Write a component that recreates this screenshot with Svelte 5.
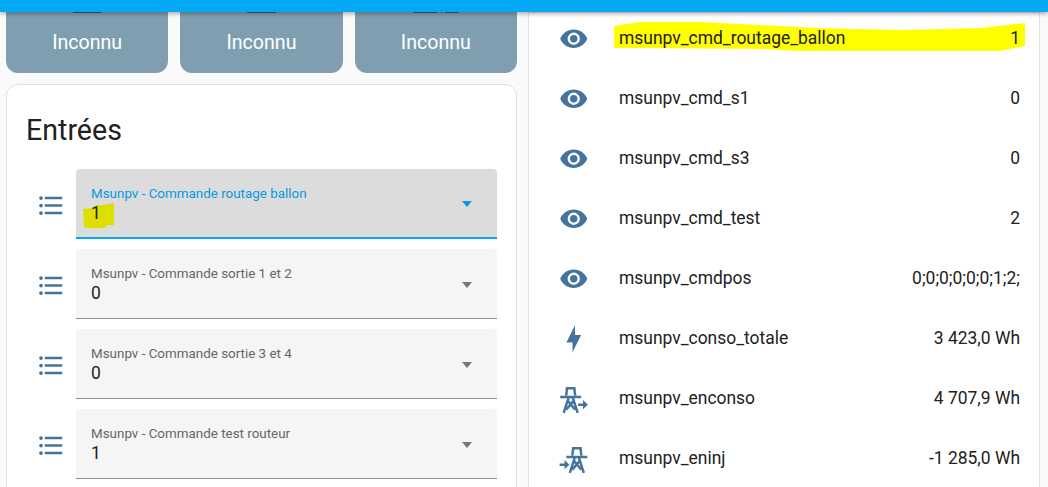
<script>
  const tiles = [
    { marks: [29] },
    { marks: [29] },
    { marks: [24, 1, 13] }
  ];

  const inputs = [
    { label: 'Msunpv - Commande routage ballon', value: '1', active: true },
    { label: 'Msunpv - Commande sortie 1 et 2', value: '0' },
    { label: 'Msunpv - Commande sortie 3 et 4', value: '0' },
    { label: 'Msunpv - Commande test routeur', value: '1' }
  ];

  const entities = [
    { icon: 'eye', name: 'msunpv_cmd_routage_ballon', state: '1', marked: true },
    { icon: 'eye', name: 'msunpv_cmd_s1', state: '0' },
    { icon: 'eye', name: 'msunpv_cmd_s3', state: '0' },
    { icon: 'eye', name: 'msunpv_cmd_test', state: '2' },
    { icon: 'eye', name: 'msunpv_cmdpos', state: '0;0;0;0;0;0;1;2;' },
    { icon: 'bolt', name: 'msunpv_conso_totale', state: '3 423,0 Wh' },
    { icon: 'export', name: 'msunpv_enconso', state: '4 707,9 Wh' },
    { icon: 'import', name: 'msunpv_eninj', state: '-1 285,0 Wh' }
  ];

  const eye = 'M12 9a3 3 0 0 0-3 3 3 3 0 0 0 3 3 3 3 0 0 0 3-3 3 3 0 0 0-3-3m0 8a5 5 0 0 1-5-5 5 5 0 0 1 5-5 5 5 0 0 1 5 5 5 5 0 0 1-5 5m0-12.5C7 4.500 2.730 7.610 1 12c1.730 4.390 6 7.500 11 7.500s9.270-3.110 11-7.500c-1.730-4.390-6-7.500-11-7.500z';
  const bolt = 'M11 15H6L13 1V9H18L11 23V15Z';
  const towerBars = 'M5.500 2.500h8v2h-8zM1 9.500h17v2H1z';
  const towerLines = 'M6.500 4 5.800 9.500M12.500 4l.7 5.500M7.800 11 3.800 23.500M11.200 11l4 12.500M7 13.500l6.200 7.500M12 13.500 5.800 21';
</script>

{#snippet tower()}
  <path d={towerBars} />
  <path class="tower-lines" d={towerLines} />
{/snippet}

<div class="page">
  <header class="top-bar"></header>

  <main class="columns">
    <section class="left">
      <div class="tiles">
        {#each tiles as tile}
          <div class="tile">
            <div class="tile-icon">
              {#each tile.marks as width}
                <span style="width: {width}px"></span>
              {/each}
            </div>
            <span>Inconnu</span>
          </div>
        {/each}
      </div>

      <div class="card inputs">
        <h1>Entrées</h1>
        {#each inputs as input}
          <div class="input-row">
            <svg class="list-icon" viewBox="0 0 24 24" aria-hidden="true">
              <path d="M7 5h14v2H7V5zm0 8v-2h14v2H7zM4 4.500A1.500 1.500 0 1 1 4 7.500 1.500 1.500 0 0 1 4 4.500zm0 6A1.500 1.500 0 1 1 4 13.500 1.500 1.500 0 0 1 4 10.500zM7 19v-2h14v2H7zm-3-2.500a1.500 1.500 0 1 1 0 3 1.500 1.500 0 0 1 0-3z" />
            </svg>
            <div class="select" class:active={input.active}>
              <div class="select-text">
                <div class="label">{input.label}</div>
                <div class="value">
                  {#if input.active}
                    <svg class="marker-small" viewBox="0 0 32 26" aria-hidden="true">
                      <path d="M0 6 L10 5 L13 2 L20 2 L31 0 L31 22 L24 22 L22 25 L5 25 L1 24 Z" />
                    </svg>
                  {/if}
                  <span>{input.value}</span>
                </div>
              </div>
              <span class="arrow"></span>
            </div>
          </div>
        {/each}
      </div>
    </section>

    <section class="card entities">
      {#each entities as entity}
        <div class="entity">
          {#if entity.marked}
            <svg class="marker" viewBox="0 0 411 31" aria-hidden="true">
              <path d="M0 5 L26 1 L86 1 L146 4 L206 7 L286 9 L366 7 L411 2 L411 25 L386 30 L266 30 L186 30 L146 28 L26 27 L0 27 Z" />
            </svg>
          {/if}
          <svg class="entity-icon" viewBox="0 0 24 24" aria-hidden="true">
            {#if entity.icon === 'eye'}
              <path d={eye} />
            {:else if entity.icon === 'bolt'}
              <path d={bolt} />
            {:else if entity.icon === 'export'}
              {@render tower()}
              <path d="M15.500 15.800h4V13l4 3.800-4 3.800v-2.800h-4z" />
            {:else}
              <g transform="translate(24 0) scale(-1 1)">{@render tower()}</g>
              <path d="M.5 15.800h4V13l4 3.800-4 3.800v-2.800h-4z" />
            {/if}
          </svg>
          <span class="name">{entity.name}</span>
          <span class="state">{entity.state}</span>
        </div>
      {/each}
    </section>
  </main>
</div>

<style>
  :global(body) {
    margin: 0;
    background: #fafafa;
    font-family: Roboto, "Liberation Sans", sans-serif;
    color: #212121;
  }

  .page {
    height: 487px;
    overflow: hidden;
  }

  .top-bar {
    position: relative;
    z-index: 2;
    height: 12px;
    background: #03a9f4;
    box-shadow: 0 2px 4px rgba(0, 0, 0, 0.3);
  }

  .columns {
    display: grid;
    grid-template-columns: 511px 512px;
    gap: 11px;
    padding: 0 8px 0 6px;
  }

  .tiles {
    display: grid;
    grid-template-columns: repeat(3, 1fr);
    gap: 12px;
  }

  .tile {
    height: 61px;
    box-sizing: border-box;
    padding-top: 20px;
    border-radius: 0 0 12px 12px;
    background: #7f9fb0;
    color: #fff;
    font-size: 19.6px;
    line-height: 22px;
    text-align: center;
    position: relative;
  }

  .tile-icon {
    position: absolute;
    top: 0;
    left: 0;
    right: 0;
    display: flex;
    justify-content: center;
    gap: 3px;
  }

  .tile-icon span {
    height: 1px;
    background: #3f5a68;
  }

  .card {
    box-sizing: border-box;
    background: #fff;
    border: 1px solid #e0e0e0;
  }

  .inputs {
    margin-top: 11px;
    height: 500px;
    border-radius: 12px;
    padding: 0 19px 0 20px;
  }

  h1 {
    margin: 25px 0 19px -1px;
    font-size: 28.6px;
    font-weight: 400;
    line-height: 40px;
  }

  .input-row {
    display: flex;
    align-items: center;
    height: 70px;
    margin-bottom: 10px;
  }

  .list-icon {
    flex: none;
    width: 30px;
    height: 30px;
    margin: 0 10px 0 9px;
    fill: #44739e;
    transform: translateY(1.5px);
  }

  .select {
    flex: 1;
    height: 70px;
    box-sizing: border-box;
    display: flex;
    align-items: center;
    padding: 0 25px 0 15px;
    background: #f5f5f5;
    border-bottom: 1px solid #8c8c8c;
    border-radius: 4px 4px 0 0;
  }

  .select.active {
    background: #dcdcdc;
    border-bottom: 2px solid #03a9f4;
  }

  .select-text {
    flex: 1;
    align-self: flex-start;
    padding-top: 16px;
  }

  .label {
    font-size: 13.4px;
    line-height: 17px;
    color: #666;
  }

  .active .label {
    color: #039be5;
  }

  .value {
    position: relative;
    font-size: 17.45px;
    line-height: 22px;
  }

  .value span {
    position: relative;
  }

  .marker-small {
    position: absolute;
    left: -8px;
    top: 1px;
    width: 32px;
    height: 26px;
    fill: #dede00;
  }

  .arrow {
    width: 0;
    height: 0;
    margin-top: 2px;
    border-left: 5.500px solid transparent;
    border-right: 5.500px solid transparent;
    border-top: 6px solid #757575;
  }

  .active .arrow {
    border-top-color: #039be5;
  }

  .entities {
    height: 500px;
    padding: 0 19px 0 30px;
  }

  .entity {
    position: relative;
    display: flex;
    align-items: center;
    height: 60px;
    font-size: 17.45px;
  }

  .entity:first-child {
    margin-top: -4px;
  }

  .marker {
    position: absolute;
    left: 55px;
    top: 12px;
    width: 411px;
    height: 31px;
    fill: #ffff00;
  }

  .entity-icon {
    position: relative;
    flex: none;
    width: 29.5px;
    height: 29.5px;
    margin-right: 30.5px;
    fill: #44739e;
  }

  .tower-lines {
    fill: none;
    stroke: #44739e;
    stroke-width: 2;
  }

  .name,
  .state {
    position: relative;
    line-height: 20px;
    padding-bottom: 2px;
  }

  .name {
    flex: 1;
  }
</style>
